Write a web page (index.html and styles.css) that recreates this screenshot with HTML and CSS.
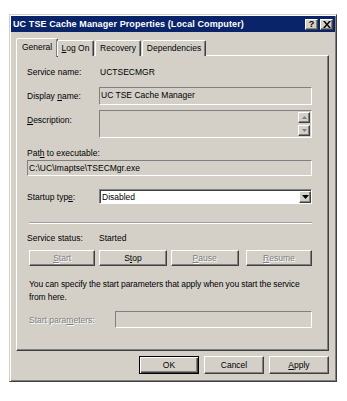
FILE: index.html
```html
<!DOCTYPE html>
<html>
<head>
<meta charset="utf-8">
<link rel="stylesheet" href="styles.css">
</head>
<body>
<div class="dialog">
  <div class="titlebar">
    <span class="title">UC TSE Cache Manager Properties (Local Computer)</span>
    <div class="caption-buttons">
      <span class="cap-btn help">?</span>
      <span class="cap-btn close"><svg width="8" height="7" viewBox="0 0 8 7"><path d="M0 0h2l2 2.5L6 0h2L5 3.5 8 7H6L4 4.5 2 7H0l3-3.5z" fill="#000"/></svg></span>
    </div>
  </div>
  <div class="tabs">
    <div class="tab active">General</div>
    <div class="tab"><u>L</u>og On</div>
    <div class="tab">Recovery</div>
    <div class="tab">Dependencies</div>
  </div>
  <div class="panel">
    <div class="row r-service">
      <span class="label">Service name:</span>
      <span class="value">UCTSECMGR</span>
    </div>
    <div class="row r-display">
      <span class="label">Display <u>n</u>ame:</span>
      <div class="field readonly">UC TSE Cache Manager</div>
    </div>
    <div class="row r-desc">
      <span class="label"><u>D</u>escription:</span>
      <div class="field readonly desc">
        <div class="scroll">
          <span class="sbtn"><svg width="5" height="3" viewBox="0 0 5 3"><path d="M2.5 0L5 3H0z" fill="#808080"/></svg></span>
          <span class="sbtn"><svg width="5" height="3" viewBox="0 0 5 3"><path d="M0 0h5L2.5 3z" fill="#808080"/></svg></span>
        </div>
      </div>
    </div>
    <div class="path-label">Pat<u>h</u> to executable:</div>
    <div class="field readonly path">C:\UC\Imaptse\TSECMgr.exe</div>
    <div class="row r-startup">
      <span class="label">Startup typ<u>e</u>:</span>
      <div class="select">
        <span class="sel-text">Disabled</span>
        <span class="drop"><svg width="7" height="4" viewBox="0 0 7 4"><path d="M0 0h7L3.5 4z" fill="#000"/></svg></span>
      </div>
    </div>
    <div class="separator"></div>
    <div class="row r-status">
      <span class="label">Service status:</span>
      <span class="value">Started</span>
    </div>
    <div class="svc-buttons">
      <span class="btn disabled"><u>S</u>tart</span>
      <span class="btn">S<u>t</u>op</span>
      <span class="btn disabled"><u>P</u>ause</span>
      <span class="btn disabled"><u>R</u>esume</span>
    </div>
    <p class="note">You can specify the start parameters that apply when you start the service from here.</p>
    <div class="row r-params">
      <span class="label disabled-text">Start para<u>m</u>eters:</span>
      <div class="field readonly params"></div>
    </div>
  </div>
  <div class="footer">
    <span class="btn big default">OK</span>
    <span class="btn big">Cancel</span>
    <span class="btn big"><u>A</u>pply</span>
  </div>
</div>
</body>
</html>
```
FILE: styles.css
```css
* { box-sizing: border-box; }
body {
  margin: 0;
  background: #fff;
  font-family: "Liberation Sans", Arial, sans-serif;
  font-size: 8.5px;
  color: #000;
}
u { text-decoration: underline; text-underline-offset: 1px; }
.dialog {
  margin: 14px 0 0 9px;
  width: 328px;
  height: 368px;
  background: #d4d0c8;
  border: 1px solid;
  border-color: #d4d0c8 #404040 #404040 #d4d0c8;
  box-shadow: inset 1px 1px 0 #fff, inset -1px -1px 0 #808080;
  padding: 1px;
  display: flex;
  flex-direction: column;
}
.titlebar {
  height: 16px;
  background: #0a246a;
  display: flex;
  align-items: center;
  justify-content: space-between;
  padding: 0 2px 0 2px;
}
.title {
  color: #fff;
  font-weight: bold;
  font-size: 9px;
  letter-spacing: 0.1px;
}
.caption-buttons { display: flex; gap: 2px; }
.cap-btn {
  width: 13px;
  height: 11px;
  background: #d4d0c8;
  border: 1px solid;
  border-color: #fff #404040 #404040 #fff;
  box-shadow: inset -1px -1px 0 #808080;
  display: flex;
  align-items: center;
  justify-content: center;
  font-weight: bold;
  font-size: 9px;
  line-height: 1;
}
.tabs {
  display: flex;
  margin: 6px 0 0 5px;
  height: 19px;
  align-items: flex-end;
  position: relative;
  z-index: 1;
}
.tab {
  height: 16px;
  padding: 0 3px;
  border: 1px solid;
  border-bottom: none;
  border-color: #fff #404040 transparent #fff;
  box-shadow: inset -1px 0 0 #808080;
  border-radius: 2px 2px 0 0;
  line-height: 15px;
  background: #d4d0c8;
  margin-bottom: 1px;
  white-space: nowrap;
  text-align: center;
}
.tab.active {
  height: 19px;
  padding: 0 4px;
  margin: 0 -1px 0 0;
  line-height: 17px;
  background: #d4d0c8;
}
.tab:nth-child(2) { width: 37px; }
.tab:nth-child(3) { width: 46px; margin-left: 1px; }
.tab:nth-child(4) { width: 64px; margin-left: 1px; }
.tab.active { width: 42px; }
.panel {
  margin: -2px 0 0 5px;
  width: 313px;
  height: 296px;
  border: 1px solid;
  border-color: #fff #404040 #404040 #fff;
  box-shadow: inset -1px -1px 0 #808080;
  padding: 0 16px 0 10px;
  display: flex;
  flex-direction: column;
}
.row { display: flex; align-items: center; }
.label { width: 72px; flex: none; }
.r-service { margin-top: 9px; height: 14px; }
.r-service .value { padding-left: 1px; }
.field {
  flex: 1;
  border: 1px solid;
  border-color: #808080 #fff #fff #808080;
  background: #d4d0c8;
  padding: 1px 1px;
  line-height: 13px;
}
.r-display { margin-top: 8px; height: 18px; }
.r-display .field { height: 18px; }
.r-desc { margin-top: 5px; align-items: flex-start; }
.r-desc .label { margin-top: 5px; }
.field.desc { height: 28px; position: relative; display: flex; justify-content: flex-end; padding: 1px; }
.scroll { display: flex; flex-direction: column; justify-content: space-between; width: 12px; }
.sbtn {
  width: 12px;
  height: 11px;
  border: 1px solid;
  border-color: #fff #404040 #404040 #fff;
  box-shadow: inset -1px -1px 0 #808080;
  display: flex;
  align-items: center;
  justify-content: center;
}
.path-label { margin-top: 9px; height: 13px; line-height: 13px; }
.field.path { flex: none; height: 16px; line-height: 13px; padding: 1px 1px; }
.r-startup { margin-top: 13px; height: 15px; }
.select {
  flex: 1;
  height: 15px;
  background: #fff;
  border: 1px solid;
  border-color: #808080 #fff #fff #808080;
  box-shadow: inset 1px 1px 0 #404040;
  display: flex;
  align-items: center;
  justify-content: space-between;
  padding: 1px 0 1px 2px;
}
.sel-text { line-height: 12px; }
.drop {
  width: 12px;
  height: 12px;
  background: #d4d0c8;
  border: 1px solid;
  border-color: #fff #404040 #404040 #fff;
  box-shadow: inset -1px -1px 0 #808080;
  display: flex;
  align-items: center;
  justify-content: center;
}
.separator {
  margin-top: 18px;
  height: 2px;
  border-top: 1px solid #a0a0a0;
  border-bottom: 1px solid #fff;
  margin-left: 2px;
}
.r-status { margin-top: 7px; height: 14px; }
.svc-buttons {
  margin-top: 5px;
  display: flex;
  gap: 4px;
  padding-left: 2px;
}
.btn {
  height: 16px;
  width: 67px;
  background: #d4d0c8;
  border: 1px solid;
  border-color: #fff #404040 #404040 #fff;
  box-shadow: inset -1px -1px 0 #808080;
  display: flex;
  align-items: center;
  justify-content: center;
}
.svc-buttons .btn:nth-child(2) { width: 68px; }
.svc-buttons .btn:nth-child(3) { width: 69px; }
.svc-buttons .btn:nth-child(4) { width: 67px; margin-left: 3px; }
.btn.disabled { color: #808080; text-shadow: 1px 1px 0 #fff; }
.disabled-text { color: #808080; text-shadow: 1px 1px 0 #fff; }
.note {
  margin: 12px 0 0 2px;
  line-height: 13px;
  letter-spacing: -0.1px;
}
.r-params { margin-top: 7px; height: 17px; }
.r-params .label { padding-left: 2px; width: 88px; }
.field.params { height: 17px; }
.footer {
  display: flex;
  justify-content: flex-end;
  gap: 5px;
  margin-top: 5px;
  padding-right: 6px;
}
.btn.big { width: 60px; height: 18px; }
.btn.default {
  border: 1px solid #000;
  box-shadow: inset 1px 1px 0 #fff, inset -1px -1px 0 #404040, inset -2px -2px 0 #808080;
}
```
